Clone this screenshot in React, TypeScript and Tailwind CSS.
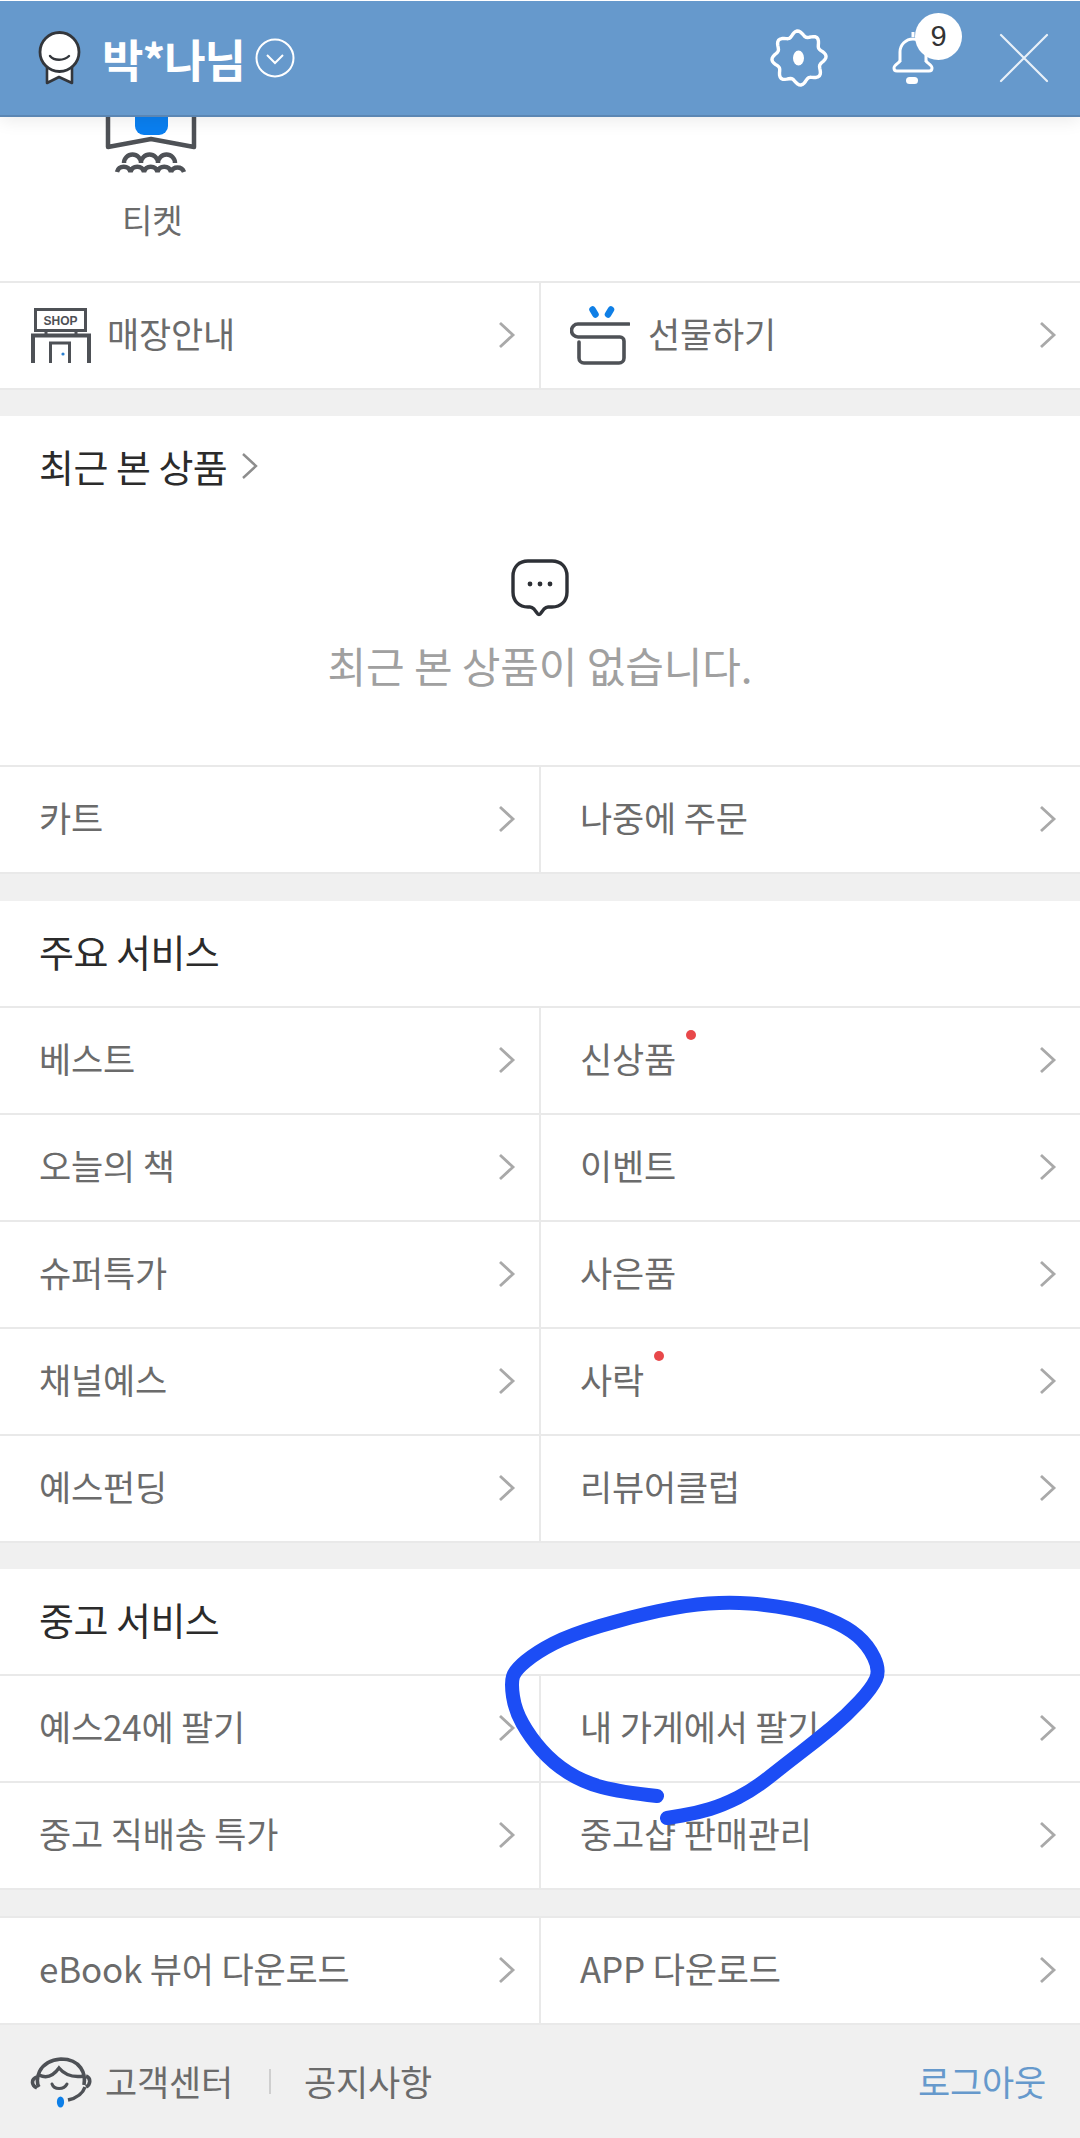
const FONT = "font-['Noto_Sans_CJK_KR','Noto_Sans',sans-serif]";

// wavy gear outline, 8 soft lobes
function gearPath() {
  const pts: string[] = [];
  for (let i = 0; i < 96; i++) {
    const t = (i / 96) * Math.PI * 2;
    const r = 24.5 + 2.6 * Math.cos(8 * t + 0.5);
    pts.push(`${(29 + r * Math.cos(t)).toFixed(2)} ${(29 + r * Math.sin(t)).toFixed(2)}`);
  }
  return `M${pts.join("L")}Z`;
}

// the pen stroke, points taken off the reference
const PEN: [number, number][] = [
  [657, 1796], [620, 1792], [583, 1782], [553, 1763], [530, 1737], [515, 1710], [511, 1683], [515, 1670],
  [537, 1652], [570, 1635], [630, 1617], [687, 1605], [730, 1602], [770, 1605], [813, 1613], [847, 1627],
  [868, 1645], [880, 1670], [872, 1688], [847, 1715], [817, 1740], [787, 1763], [753, 1790], [723, 1805],
  [697, 1813], [667, 1818],
];

function penPath() {
  let d = `M${PEN[0][0]} ${PEN[0][1]}`;
  for (let i = 1; i < PEN.length - 1; i++) {
    const mx = (PEN[i][0] + PEN[i + 1][0]) / 2;
    const my = (PEN[i][1] + PEN[i + 1][1]) / 2;
    d += `Q${PEN[i][0]} ${PEN[i][1]} ${mx} ${my}`;
  }
  const last = PEN[PEN.length - 1];
  return `${d}L${last[0]} ${last[1]}`;
}

function Chevron() {
  return (
    <svg width="18" height="28" viewBox="0 0 18 28" fill="none" className="mt-[-2px] shrink-0">
      <path d="M2 2l13 12L2 26" stroke="#a9a9a9" strokeWidth="2.8" />
    </svg>
  );
}

function ShopIcon() {
  return (
    <svg width="60" height="56" viewBox="0 0 60 56" fill="none" className="shrink-0">
      <rect x="4.5" y="1.5" width="50" height="21" stroke="#4e5156" strokeWidth="3" />
      <text x="29.5" y="17" textAnchor="middle" fontSize="12" fontWeight="700" fill="#4e5156" fontFamily="Liberation Sans">SHOP</text>
      <path d="M15 23v4M45 23v4" stroke="#4e5156" strokeWidth="3" />
      <path d="M2 55V27.5h56V55" stroke="#4e5156" strokeWidth="4" />
      <path d="M19.5 55V35h19v20" stroke="#4e5156" strokeWidth="3" />
      <circle cx="32" cy="46" r="1.6" fill="#2a7fd0" />
    </svg>
  );
}

function GiftIcon() {
  return (
    <svg width="60" height="60" viewBox="0 0 60 60" fill="none" className="shrink-0">
      <path d="M59 18H8a6.5 6.5 0 0 0 0 13h42a4 4 0 0 1 4 4v17a5 5 0 0 1-5 5H14a5 5 0 0 1-5-5V36" stroke="#4e5156" strokeWidth="3.6" strokeLinecap="round" />
      <path d="M22.5 3.5l3 5M41 3.5l-3 5" stroke="#0f7fe6" strokeWidth="6.5" strokeLinecap="round" />
    </svg>
  );
}

function Row({ label, icon, dot, pad, gap }: { label: string; icon?: React.ReactNode; dot?: string; pad?: string; gap?: string }) {
  return (
    <div className={`flex h-[107px] flex-1 items-center justify-between border-b-2 border-[#e9e9e9] pr-[23px] [&:first-child]:w-[541px] [&:first-child]:flex-none [&:first-child]:border-r-2 ${pad ?? "pl-[39px]"}`}>
      <div className={`flex items-center ${gap ?? "gap-[19px]"}`}>
        {icon}
        <span className="relative pb-[4px] text-[35px] tracking-[-0.2px] text-[#6b6b6b]">
          {label}
          {dot && <span className={`absolute top-[-2px] h-[10px] w-[10px] rounded-full bg-[#e8484a] ${dot}`} />}
        </span>
      </div>
      <Chevron />
    </div>
  );
}

function Pair(props: { a: string; b: string; dotB?: string }) {
  return (
    <div className="flex">
      <Row label={props.a} />
      <Row label={props.b} dot={props.dotB} />
    </div>
  );
}

function Gap() {
  return <div className="h-[26px] bg-[#f0f0f0]" />;
}

function Title({ text }: { text: string }) {
  return (
    <div className="flex h-[107px] items-center border-b-2 border-[#e9e9e9] pb-[6px] pl-[39px] text-[38px] tracking-[-0.5px] text-[#2b2b2b]">
      {text}
    </div>
  );
}

function Header() {
  return (
    <header className="absolute top-0 left-0 z-10 flex h-[117px] w-full items-center justify-between border-t border-b-2 border-t-white border-b-[#5b86b3] bg-[#6699cc] pr-[31px] pl-[38px] shadow-[0_4px_16px_rgba(0,0,0,0.08)]">
      <div className="flex items-center">
        <svg width="44" height="54" viewBox="0 0 44 54" fill="none">
          <path d="M9 35v17l12-6 13 6V35" fill="#fff" stroke="#33363b" strokeWidth="2.6" strokeLinejoin="round" />
          <circle cx="21.5" cy="21" r="19.5" fill="#fff" stroke="#33363b" strokeWidth="2.8" />
          <path d="M12 25c4 5 14 5 19 0" stroke="#33363b" strokeWidth="2.4" strokeLinecap="round" />
        </svg>
        <span className="ml-[20px] text-[45px] leading-none font-bold tracking-[-1px] text-white">박*나님</span>
        <svg width="40" height="40" viewBox="0 0 40 40" fill="none" className="ml-[10px]">
          <circle cx="20" cy="20" r="18.5" stroke="#fff" strokeWidth="2" />
          <path d="M12 17l8 8 8-8" stroke="#fff" strokeWidth="2" />
        </svg>
      </div>
      <div className="flex items-center">
        <svg width="58" height="58" viewBox="0 0 58 58" fill="none">
          <path d={gearPath()} stroke="#fff" strokeWidth="3.4" strokeLinejoin="round" />
          <ellipse cx="28.5" cy="29" rx="5.5" ry="7.5" fill="#fff" />
        </svg>
        <div className="relative ml-[63px] h-[54px] w-[44px]">
          <svg width="44" height="54" viewBox="0 0 44 54" fill="none">
            <path d="M22 1v5M9 31V21a13 13 0 0 1 26 0v10" stroke="#fff" strokeWidth="3" />
            <path d="M9 30c-1 2-6 4-6 7 0 2 1 3 3 3h32c2 0 3-1 3-3 0-3-5-5-6-7" stroke="#fff" strokeWidth="3" />
            <rect x="15" y="46" width="12" height="7" rx="3.5" fill="#fff" />
          </svg>
          <span className="absolute top-[-18px] left-[24px] flex h-[47px] w-[47px] items-center justify-center rounded-full bg-white font-['Liberation_Sans',sans-serif] text-[29px] text-[#333]">
            9
          </span>
        </div>
        <svg width="50" height="50" viewBox="0 0 50 50" fill="none" className="ml-[64px]">
          <path d="M2 2l46 46M48 2L2 48" stroke="#fff" strokeWidth="2.2" strokeLinecap="round" opacity="0.85" />
        </svg>
      </div>
    </header>
  );
}

export default function App() {
  return (
    <div className={`relative h-[2138px] w-[1080px] overflow-hidden bg-white ${FONT}`}>
      <Header />

      {/* menu under the header, scrolled a bit */}
      <div className="relative flex h-[283px] flex-col items-start overflow-hidden border-b-2 border-[#e9e9e9] pt-[117px] pl-[105px]">
        <svg width="92" height="56" viewBox="0 0 92 56" fill="none">
          <path d="M3 0v30l43-8 43 8V0" stroke="#4e5156" strokeWidth="4.5" strokeLinejoin="round" />
          <path d="M30 0h33v9a9 9 0 0 1-9 9H39a9 9 0 0 1-9-9z" fill="#0a7ff0" />
          <path d="M19 46a8.5 8.5 0 0 1 17 0M36 46a8.5 8.5 0 0 1 17 0M53 46a8.5 8.5 0 0 1 17 0" stroke="#4e5156" strokeWidth="4.5" />
          <path d="M12 55a7 7 0 0 1 13.5 0M25.5 55a7 7 0 0 1 13.5 0M39 55a7 7 0 0 1 13.5 0M52.5 55a7 7 0 0 1 13.5 0M66 55a7 7 0 0 1 13 0" stroke="#4e5156" strokeWidth="4.5" />
        </svg>
        <span className="mt-[23px] ml-[17px] text-[33px] leading-[46px] tracking-[-0.2px] text-[#6b6b6b]">티켓</span>
      </div>

      <div className="flex">
        <Row label="매장안내" icon={<ShopIcon />} pad="pl-[31px]" gap="gap-[16px]" />
        <Row label="선물하기" icon={<GiftIcon />} pad="pl-[29px]" gap="gap-[18px]" />
      </div>
      <Gap />

      <div className="flex h-[351px] flex-col items-center border-b-2 border-[#e9e9e9]">
        <div className="flex w-full items-center gap-[14px] pt-[25px] pl-[39px] text-[38px] leading-[50px] tracking-[-0.5px] text-[#2b2b2b]">
          최근 본 상품
          <svg width="18" height="28" viewBox="0 0 18 28" fill="none">
            <path d="M2 2l13 12L2 26" stroke="#8d8d8d" strokeWidth="2.4" />
          </svg>
        </div>
        <svg width="58" height="58" viewBox="0 0 58 58" fill="none" className="mt-[68px]">
          <path d="M17 2h24c9 0 15 6 15 15v16c0 9-6 15-15 15h-4c-2 0-3 1-4 2l-3 4c-1 2-3 2-4 0l-3-4c-1-1-2-2-4-2h-2C8 48 2 42 2 33V17C2 8 8 2 17 2z" stroke="#2d3036" strokeWidth="3.4" />
          <circle cx="19" cy="25" r="2.4" fill="#2d3036" />
          <circle cx="29" cy="25" r="2.4" fill="#2d3036" />
          <circle cx="39" cy="25" r="2.4" fill="#2d3036" />
        </svg>
        <p className="mt-[18px] text-[42px] leading-[60px] tracking-[-0.1px] text-[#a0a0a0]">최근 본 상품이 없습니다.</p>
      </div>

      <Pair a="카트" b="나중에 주문" />
      <div className="h-[27px] bg-[#f0f0f0]" />

      <Title text="주요 서비스" />
      <Pair a="베스트" b="신상품" dotB="right-[-20px]" />
      <Pair a="오늘의 책" b="이벤트" />
      <Pair a="슈퍼특가" b="사은품" />
      <Pair a="채널예스" b="사락" dotB="right-[-20px]" />
      <Pair a="예스펀딩" b="리뷰어클럽" />
      <Gap />

      <Title text="중고 서비스" />
      <Pair a="예스24에 팔기" b="내 가게에서 팔기" />
      <Pair a="중고 직배송 특가" b="중고샵 판매관리" />
      <Gap />

      <div className="flex border-t-2 border-[#e9e9e9]">
        <Row label="eBook 뷰어 다운로드" />
        <Row label="APP 다운로드" />
      </div>

      <footer className="flex h-[113px] items-center justify-between bg-[#f0f0f0] pr-[34px] pl-[30px]">
        <div className="flex items-center text-[35px] tracking-[-0.2px] text-[#6b6b6b]">
          <svg width="62" height="58" viewBox="0 0 62 58" fill="none">
            <path d="M9 34c-4-6-2-26 22-28 20 0 25 15 23 26" stroke="#4e5156" strokeWidth="3.6" />
            <path d="M9 22c8 4 15 0 20-7 5 6 13 10 25 8" stroke="#4e5156" strokeWidth="3.4" />
            <path d="M7 24c-6 2-6 8 0 11M56 23c5 2 5 8 0 11" stroke="#4e5156" strokeWidth="3.6" />
            <path d="M55 34c-2 6-8 11-17 13" stroke="#4e5156" strokeWidth="3.4" />
            <path d="M22 31c2 6 12 6 15 0" stroke="#4e5156" strokeWidth="3" strokeLinecap="round" />
            <ellipse cx="30.5" cy="49" rx="3.6" ry="5.6" fill="#0d7fe8" />
          </svg>
          <span className="ml-[13px]">고객센터</span>
          <span className="mr-[33px] ml-[36px] h-[25px] w-[2px] bg-[#cfcfcf]" />
          <span>공지사항</span>
        </div>
        <span className="text-[35px] tracking-[-0.2px] text-[#6699cc]">로그아웃</span>
      </footer>

      {/* hand-drawn circle on top of the screenshot */}
      <svg width="1080" height="2138" viewBox="0 0 1080 2138" fill="none" className="pointer-events-none absolute top-0 left-0 z-20">
        <path d={penPath()} stroke="#1c4df5" strokeWidth="14" strokeLinecap="round" strokeLinejoin="round" />
      </svg>
    </div>
  );
}
